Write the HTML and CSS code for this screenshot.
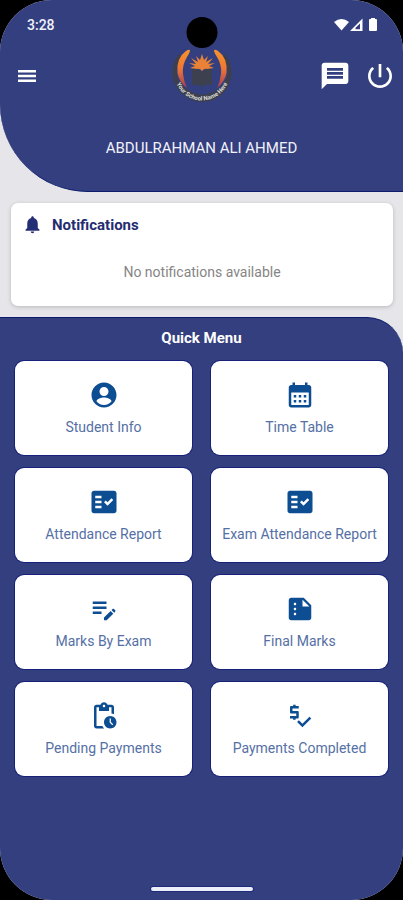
FILE: index.html
```html
<!DOCTYPE html>
<html lang="en">
<head>
<meta charset="utf-8">
<meta name="viewport" content="width=device-width, initial-scale=1">
<title>Student Home</title>
<link rel="stylesheet" href="styles.css">
</head>
<body>
<div class="screen">
  <span class="camera"></span>
  <header class="header">
    <div class="status">
      <span>3:28</span>
      <svg class="status-icons" viewBox="0 0 44 14" aria-hidden="true">
        <path d="M0 4Q7.500-2 15 4L7.500 12.500Z"/>
        <path fill-rule="evenodd" d="M16 13L28.500 .500V13zM21.500 9.800v1.400h4.500V5.500z"/>
        <path d="M37 0h4v1h1q1 0 1 1v10q0 1-1 1h-6q-1 0-1-1V2q0-1 1-1h1z"/>
      </svg>
    </div>
    <nav class="bar">
      <div class="side">
        <button class="icon-button" aria-label="Open menu"><svg class="icon-s" viewBox="0 0 24 24"><path d="M3 18h18v-2.400H3zm0-4.800h18v-2.400H3zM3 6v2.400h18V6z"/></svg></button>
      </div>
      <svg class="logo" viewBox="0 0 60 60" role="img" aria-label="School logo">
        <defs>
          <linearGradient id="flame" x1="0" y1="0" x2="0" y2="1"><stop offset="0" stop-color="#f7942b"/><stop offset=".5" stop-color="#ee7636"/><stop offset="1" stop-color="#a03d58"/></linearGradient>
          <path id="ring" d="M2.500 27A27.500 27.500 0 0 0 57.500 27"/>
        </defs>
        <path fill="#3d404c" d="M7 8A29.500 29.500 0 1 0 53 8L50 11Q57 20 55 31A25.500 25.500 0 0 1 49 40Q41 48.500 30 48.500Q19 48.500 11 40A25.500 25.500 0 0 1 5 31Q3 20 10 11Z"/>
        <path fill="url(#flame)" d="M14 5Q18 2.500 18 5Q17.500 7 15 11Q10 19 11 28Q12 36 15 42Q7 36 5.500 27Q4 12 14 5Z"/>
        <path fill="url(#flame)" d="M46 5Q42 2.500 42 5Q42.500 7 45 11Q50 19 49 28Q48 36 45 42Q53 36 54.500 27Q56 12 46 5Z"/>
        <path fill="#e98236" d="M18 22L23 20L17 17L24 18L19 12L26 16L24 10L28 14L30 8L32 14L36 10L34 16L41 12L36 18L43 17L37 20L42 22L36 23Q32 22 30 25Q28 22 24 23Z"/>
        <path fill="#3d404f" d="M20 23Q26 22 30 26Q34 22 40 23V39Q34 37.500 30 41Q26 37.500 20 39Z"/>
        <text class="logo-text"><textPath href="#ring" startOffset="50%" text-anchor="middle">Your School Name Here</textPath></text>
      </svg>
      <div class="side side-end">
        <button class="icon-button" aria-label="Messages"><svg class="icon-l" viewBox="0 0 24 24"><path fill-rule="evenodd" d="M20 2H4c-1.100 0-1.990.900-1.990 2L2 22l4-4h14c1.100 0 2-.900 2-2V4c0-1.100-.900-2-2-2zM6 6h12v2H6zM6 9h12v2H6zM6 12h12v2H6z"/></svg></button>
        <button class="icon-button" aria-label="Log out"><svg class="icon-l" viewBox="0 0 24 24"><path d="M13 3h-2v10h2V3zm4.830 2.170l-1.420 1.420C17.990 7.860 19 9.810 19 12c0 3.870-3.130 7-7 7s-7-3.130-7-7c0-2.190 1.010-4.140 2.580-5.420L6.170 5.170C4.230 6.820 3 9.260 3 12c0 4.970 4.030 9 9 9s9-4.030 9-9c0-2.740-1.230-5.180-3.170-6.830z"/></svg></button>
      </div>
    </nav>
    <h1 class="name">ABDULRAHMAN ALI AHMED</h1>
  </header>

  <section class="notice">
    <h2 class="notice-title"><svg viewBox="0 0 24 24" aria-hidden="true"><path d="M12 22c1.100 0 2-.900 2-2h-4c0 1.100.890 2 2 2zm6-6v-5c0-3.070-1.640-5.640-4.500-6.320V4c0-.830-.670-1.500-1.500-1.500s-1.500.670-1.500 1.500v.680C7.630 5.360 6 7.920 6 11v5l-2 2v1h16v-1l-2-2z"/></svg>Notifications</h2>
    <p class="notice-text">No notifications available</p>
  </section>

  <main class="quick">
    <h2 class="quick-title">Quick Menu</h2>
    <div class="grid">
      <button class="tile"><svg viewBox="0 0 24 24"><path fill-rule="evenodd" d="M12 2C6.480 2 2 6.480 2 12s4.480 10 10 10 10-4.480 10-10S17.520 2 12 2zm0 3.500c2 0 3.600 1.600 3.600 3.600s-1.600 3.600-3.600 3.600-3.600-1.600-3.600-3.600S10 5.500 12 5.500zm0 14.500c-2.500 0-4.700-1.200-6-3 .030-2 4-3.100 6-3.100s5.970 1.100 6 3.100c-1.300 1.800-3.500 3-6 3z"/></svg>Student Info</button>
      <button class="tile"><svg viewBox="0 0 24 24"><path fill-rule="evenodd" d="M19 4h-1V2h-2v2H8V2H6v2H5c-1.110 0-1.990.900-1.990 2L3 20c0 1.100.890 2 2 2h14c1.100 0 2-.900 2-2V6c0-1.100-.900-2-2-2zm0 16H5V10h14v10zM7 12h2v2H7zm4 0h2v2h-2zm4 0h2v2h-2zm-8 4h2v2H7zm4 0h2v2h-2zm4 0h2v2h-2z"/></svg>Time Table</button>
      <button class="tile"><svg viewBox="0 0 24 24"><path fill-rule="evenodd" d="M20 3H4c-1.100 0-2 .900-2 2v14c0 1.100.900 2 2 2h16c1.100 0 2-.900 2-2V5c0-1.100-.900-2-2-2zM10 17H5v-2h5v2zm0-4H5v-2h5v2zm0-4H5V7h5v2zm4.820 6L12 12.160l1.410-1.410 1.410 1.420L17.990 9l1.420 1.420L14.820 15z"/></svg>Attendance Report</button>
      <button class="tile"><svg viewBox="0 0 24 24"><path fill-rule="evenodd" d="M20 3H4c-1.100 0-2 .900-2 2v14c0 1.100.900 2 2 2h16c1.100 0 2-.900 2-2V5c0-1.100-.900-2-2-2zM10 17H5v-2h5v2zm0-4H5v-2h5v2zm0-4H5V7h5v2zm4.820 6L12 12.160l1.410-1.410 1.410 1.420L17.990 9l1.420 1.420L14.820 15z"/></svg>Exam Attendance Report</button>
      <button class="tile"><svg viewBox="0 0 24 24"><path d="M3 10h11v2H3v-2zm0-2h11V6H3v2zm0 8h7v-2H3v2zm15.010-3.130l.710-.710c.390-.390 1.020-.390 1.410 0l.710.710c.390.390.390 1.020 0 1.410l-.710.710-2.120-2.120zm-.710.710l-5.300 5.300V21h2.120l5.300-5.300-2.120-2.120z"/></svg>Marks By Exam</button>
      <button class="tile"><svg viewBox="0 0 24 24"><path fill-rule="evenodd" d="M15 3H5c-1.100 0-1.990.900-1.990 2L3 19c0 1.100.890 2 1.990 2H19c1.100 0 2-.900 2-2V9l-6-6zM8 17c-.550 0-1-.450-1-1s.450-1 1-1 1 .450 1 1-.450 1-1 1zm0-4c-.550 0-1-.450-1-1s.450-1 1-1 1 .450 1 1-.450 1-1 1zm0-4c-.550 0-1-.450-1-1s.450-1 1-1 1 .450 1 1-.450 1-1 1zm6 1V4.500l5.500 5.500H14z"/></svg>Final Marks</button>
      <button class="tile"><svg viewBox="0 0 24 24"><path fill-rule="evenodd" d="M17 12c-2.760 0-5 2.240-5 5s2.240 5 5 5 5-2.240 5-5-2.240-5-5-5zm1.650 7.350L16.500 17.200V14h1v2.790l1.850 1.850-.700.710zM18 3h-3.180C14.400 1.840 13.300 1 12 1s-2.400.840-2.820 2H6c-1.100 0-2 .900-2 2v15c0 1.100.900 2 2 2h6.110c-.590-.570-1.070-1.250-1.420-2H6V5h2v3h8V5h2v5.080c.710.100 1.380.310 2 .600V5c0-1.100-.900-2-2-2zm-6 2c-.550 0-1-.450-1-1s.450-1 1-1 1 .450 1 1-.450 1-1 1z"/></svg>Pending Payments</button>
      <button class="tile"><svg viewBox="0 0 24 24"><path d="M11 13V9c0-.550-.450-1-1-1H6V6h5V4H8.500V3h-2v1H5c-.550 0-1 .450-1 1v4c0 .550.450 1 1 1h4v2H4v2h2.500v1h2v-1H10c.550 0 1-.450 1-1zm8.590-.480l-5.660 5.650-2.830-2.830-1.410 1.420L13.930 21 21 13.930l-1.410-1.410z"/></svg>Payments Completed</button>
    </div>
  </main>
  <span class="home-bar"></span>
</div>
</body>
</html>
```
FILE: styles.css
```css
* { box-sizing: border-box; }

body {
  margin: 0;
  background: #000;
  font-family: Roboto, "Liberation Sans", sans-serif;
  font-size: 14px;
}

h1, h2, p { margin: 0; }

button {
  border: 0;
  padding: 0;
  font: inherit;
  cursor: pointer;
}

.screen {
  position: relative;
  display: flex;
  flex-direction: column;
  min-height: 100vh;
  overflow: hidden;
  border-radius: 52px;
  background: #e6e6ea;
}

.camera {
  position: absolute;
  top: 17px;
  left: 50%;
  z-index: 1;
  width: 31px;
  height: 31px;
  border-radius: 50%;
  background: #000;
  transform: translateX(-50%);
}

.header {
  background: #343f7f;
  border-bottom: 1px solid #0d1b6c;
  border-bottom-left-radius: 88px;
  color: #f0f1fa;
}

.status {
  display: flex;
  align-items: center;
  justify-content: space-between;
  height: 46px;
  padding: 4px 25px 0 27px;
  font-weight: 500;
}

.status-icons { width: 44px; height: 14px; fill: #fff; }

.bar {
  display: grid;
  grid-template-columns: 1fr 60px 1fr;
  align-items: center;
}

.side {
  display: flex;
  align-items: center;
  padding-left: 15px;
}

.side-end {
  justify-content: flex-end;
  gap: 13px;
  padding: 0 7px 0 0;
}

.icon-button { display: flex; background: none; }
.icon-button svg { fill: #fff; }
.icon-s { width: 24px; height: 24px; }
.icon-l { width: 32px; height: 32px; }

.logo { width: 60px; height: 60px; overflow: visible; }
.logo-text { font-size: 6px; font-weight: 700; fill: #dcdcdc; }

.name {
  padding: 32px 0 33px;
  font-size: 15px;
  font-weight: 400;
  line-height: 20px;
  text-align: center;
}

.notice {
  margin: 11px 10px 11px 11px;
  padding: 11px 11px 24px;
  border-radius: 7px;
  background: #fff;
  box-shadow: 0 1px 4px rgba(0, 0, 0, 0.2);
}

.notice-title {
  display: flex;
  align-items: center;
  gap: 9px;
  font-size: 15px;
  line-height: 20px;
  color: #242c70;
}

.notice-title svg { width: 21px; height: 21px; fill: #232e75; }

.notice-text {
  margin-top: 27px;
  line-height: 20px;
  text-align: center;
  color: #858585;
}

.quick {
  flex: 1;
  padding: 10px 15px 48px;
  background: #343f7f;
  border-top: 1px solid #0d1b6c;
  border-top-right-radius: 36px;
}

.quick-title {
  margin-bottom: 13px;
  font-size: 15px;
  line-height: 20px;
  text-align: center;
  color: #fff;
}

.grid {
  display: grid;
  grid-template-columns: 1fr 1fr;
  gap: 13px 19px;
}

.tile {
  display: flex;
  flex-direction: column;
  align-items: center;
  justify-content: center;
  gap: 7px;
  height: 94px;
  border-radius: 9px;
  background: #fff;
  box-shadow: 0 0 0 1px #17217a;
  color: #5570a5;
  line-height: 20px;
}

.tile svg { width: 30px; height: 30px; fill: #0d4d92; }

.home-bar {
  position: absolute;
  bottom: 9px;
  left: 50%;
  width: 102px;
  height: 4px;
  border-radius: 2px;
  background: #eceefa;
  box-shadow: 0 0 0 1px #1c2c78;
  transform: translateX(-50%);
}
```
